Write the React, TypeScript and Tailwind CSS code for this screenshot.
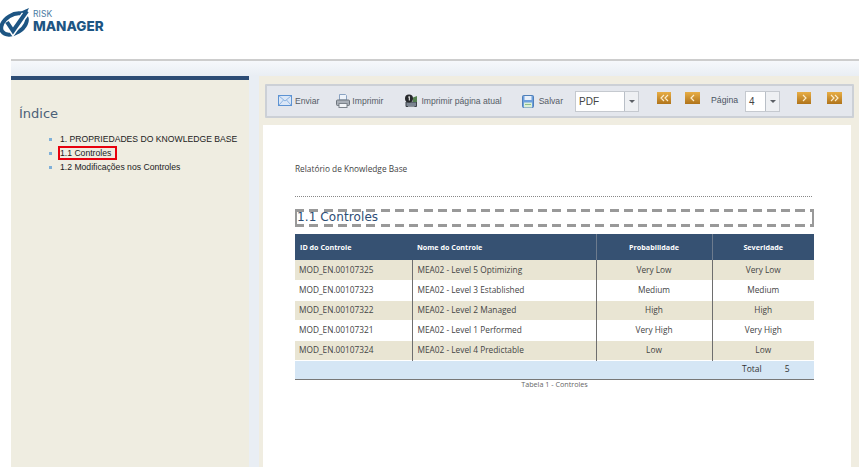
import React from "react";

const rows = [
  ["MOD_EN.00107325", "MEA02 - Level 5 Optimizing", "Very Low", "Very Low"],
  ["MOD_EN.00107323", "MEA02 - Level 3 Established", "Medium", "Medium"],
  ["MOD_EN.00107322", "MEA02 - Level 2 Managed", "High", "High"],
  ["MOD_EN.00107321", "MEA02 - Level 1 Performed", "Very High", "Very High"],
  ["MOD_EN.00107324", "MEA02 - Level 4 Predictable", "Low", "Low"],
];

const Envelope = () => (
  <svg width="14" height="11" viewBox="0 0 14 11">
    <rect x="0.5" y="0.5" width="13" height="10" fill="#dbe7f7" stroke="#5d93d3" />
    <path d="M1 1l6 5 6-5M1 10l4.5-5M13 10L8.5 5" fill="none" stroke="#8db4e2" />
  </svg>
);
const Printer = () => (
  <svg width="14" height="14" viewBox="0 0 14 14">
    <path d="M3.5 6V.5h6l1 1V6z" fill="#eef3fa" stroke="#8aa3c2" />
    <rect x="0.5" y="6" width="13" height="5.5" rx="1" fill="#aab0b8" stroke="#6d747c" />
    <rect x="3" y="9.5" width="8" height="4" fill="#f3f5f8" stroke="#7d848c" />
  </svg>
);
const PrinterPage = () => (
  <svg width="14" height="14" viewBox="0 0 14 14">
    <path d="M2 8h10.5v4.5H2z" fill="#7b8490" stroke="#3d4248" />
    <path d="M9 3.5l4-1.5v6H9z" fill="#55804f" />
    <circle cx="5" cy="4.5" r="4" fill="#26282b" />
    <path d="M4.3 3.2l1-.7v4" fill="none" stroke="#fff" strokeWidth="1" />
    <path d="M4 12.5h6.5v1H4z" fill="#dfe3e8" />
  </svg>
);
const Floppy = () => (
  <svg width="12" height="13" viewBox="0 0 12 13">
    <rect x="0.5" y="0.5" width="11" height="12" rx="1" fill="#6c9fdc" stroke="#4f7fb8" />
    <rect x="2.5" y="1" width="7" height="4" fill="#e9f0f9" />
    <rect x="2" y="7.5" width="8" height="5" fill="#dcefd8" />
    <path d="M3 9.5h6" stroke="#8fbf88" />
  </svg>
);
const Arrow = ({ d, w }: { d: string; w: number }) => (
  <div
    className="mb-[7px] flex h-[12px] items-center justify-center bg-gradient-to-b from-[#e8ae45] to-[#b0741a]"
    style={{ width: w }}
  >
    <svg width="10" height="8" viewBox="0 0 10 8">
      <path d={d} fill="none" stroke="#fbeccb" strokeWidth="1.2" />
    </svg>
  </div>
);
const Caret = () => (
  <div className="flex h-full w-[14px] items-center justify-center border-l border-[#b9bfc7] bg-[#eef0f3]">
    <div className="h-0 w-0 border-x-[3px] border-t-[3px] border-x-transparent border-t-[#5c6066]" />
  </div>
);
const ToolBtn = ({ icon, label, gap, cls }: { icon: React.ReactNode; label: string; gap: string; cls: string }) => (
  <div className={`flex items-center ${gap} ${cls}`}>
    {icon}
    <span className="text-[8.6px] text-[#555c66]">{label}</span>
  </div>
);

export default function App() {
  return (
    <div className="h-[467px] w-[864px] overflow-hidden bg-white font-['Liberation_Sans',sans-serif]">
      <header className="h-[59px] pt-[8px]">
        <div className="flex items-start">
          <svg width="33" height="29" viewBox="0 0 33 29">
            <ellipse cx="14" cy="16" rx="14" ry="9" transform="rotate(-32 14 16)" fill="none" stroke="#1d5583" strokeWidth="4" />
            <path d="M7 14l6 9L28 2" fill="none" stroke="#fff" strokeWidth="7" />
            <path d="M7 14l6 9L27 3" fill="none" stroke="#1d5583" strokeWidth="4" />
            <path d="M20 4L29 0l-3 6z" fill="#1d5583" />
          </svg>
          <div className="mt-[2px] flex flex-col font-['Inter',sans-serif] text-[#1d5583]">
            <span className="text-[8.5px] leading-[9px] tracking-[0.1px] text-[#4a7ba3]">RISK</span>
            <span className="text-[13.5px] font-extrabold leading-[14px]">MANAGER</span>
          </div>
        </div>
      </header>

      <div className="ml-[11px] flex h-[408px] w-[848px] flex-col border-t-2 border-[#cdcdcd]">
        <div className="h-[15px] shrink-0 bg-gradient-to-b from-[#f6f8fb] to-[#e9eef4]" />
        <div className="flex min-h-0 flex-1 bg-[#e9eef4]">
          <aside className="w-[238px] shrink-0 border-t-4 border-[#2d4d75] bg-[#efede1]">
            <h2 className="mt-[24px] pl-[8px] font-['DejaVu_Sans',sans-serif] text-[13px] font-[400] leading-[20px] text-[#4a6078]">Índice</h2>
            <ul className="mt-[8px] pl-[38px] text-[8.65px] text-[#222]">
              <li className="flex h-[14px] items-center">
                <span className="mr-[8px] h-[3px] w-[3px] bg-[#7fb0d8]" />
                <span>1. PROPRIEDADES DO KNOWLEDGE BASE</span>
              </li>
              <li className="flex h-[14px] items-center">
                <span className="mr-[6px] h-[3px] w-[3px] bg-[#7fb0d8]" />
                <span className="flex h-[14px] w-[59px] items-center border-2 border-[#e8000d] bg-transparent">1.1 Controles</span>
              </li>
              <li className="flex h-[14px] items-center">
                <span className="mr-[8px] h-[3px] w-[3px] bg-[#7fb0d8]" />
                <span>1.2 Modificações nos Controles</span>
              </li>
            </ul>
          </aside>

          <main className="ml-[10px] flex w-[600px] shrink-0 flex-col bg-[#f0ede1] pt-[8px]">
            <div className="ml-[6px] flex h-[34px] w-[589px] shrink-0 items-center rounded-[1px] border-2 border-[#ccd0d6] bg-[#e4e7ed]">
              <ToolBtn icon={<Envelope />} label="Enviar" gap="gap-[3px]" cls="ml-[11px]" />
              <ToolBtn icon={<Printer />} label="Imprimir" gap="gap-[2px]" cls="ml-[17px]" />
              <ToolBtn icon={<PrinterPage />} label="Imprimir página atual" gap="gap-[3px]" cls="ml-[21px]" />
              <ToolBtn icon={<Floppy />} label="Salvar" gap="gap-[5px]" cls="ml-[20px]" />
              <div className="ml-[12px] flex h-[21px] w-[64px] items-center justify-between border border-[#c5c9cf] bg-white pl-[3px] text-[10px] text-[#444]">
                PDF
                <Caret />
              </div>
              <div className="ml-[18px]"><Arrow w={14} d="M5 1L2 4l3 3M9 1L6 4l3 3" /></div>
              <div className="ml-[14px]"><Arrow w={15} d="M6 1L3 4l3 3" /></div>
              <span className="ml-[11px] text-[8.7px] text-[#4b5563]">Página</span>
              <div className="ml-[7px] flex h-[21px] w-[35px] items-center justify-between border border-[#c5c9cf] bg-white pl-[3px] text-[10px] text-[#444]">
                4
                <Caret />
              </div>
              <div className="ml-[17px]"><Arrow w={14} d="M4 1l3 3-3 3" /></div>
              <div className="ml-[16px]"><Arrow w={15} d="M1 1l3 3-3 3M5 1l3 3-3 3" /></div>
            </div>

            <div className="ml-[4px] mt-[7px] min-h-0 w-[588px] flex-1 bg-white pl-[32px] pt-[38px] font-['Open_Sans',sans-serif]">
              <p className="text-[8.3px] leading-[12px] text-[#444]">Relatório de Knowledge Base</p>
              <div className="mt-[21px] h-0 w-[517px] border-t border-dotted border-[#888]" />
              <h3 className="mt-[12px] flex h-[18px] w-[519px] flex-col justify-between">
                <div className="h-[3px] bg-[repeating-linear-gradient(90deg,#999_0_9px,transparent_9px_14.3px)]" />
                <div className="h-[12px] border-x-2 border-dashed border-[#999] font-['DejaVu_Sans',sans-serif] text-[12px] font-[400] leading-[10px] tracking-[0.1px] text-[#2d4d75]">
                  1.1 Controles
                </div>
                <div className="h-[3px] bg-[repeating-linear-gradient(90deg,#999_0_9px,transparent_9px_14.3px)]" />
              </h3>
              <table className="mt-[7px] w-[519px] table-fixed border-collapse text-[8.3px] text-[#444]">
                <colgroup>
                  <col className="w-[117px]" />
                  <col className="w-[184px]" />
                  <col className="w-[116px]" />
                  <col className="w-[102px]" />
                </colgroup>
                <thead>
                  <tr className="h-[26px] bg-[#365172] text-[7.2px] font-bold text-white">
                    <th className="pl-[5px] text-left">ID do Controle</th>
                    <th className="pl-[5px] text-left">Nome do Controle</th>
                    <th className="border-l border-[#6d7b8e] text-center">Probabilidade</th>
                    <th className="border-l border-[#6d7b8e] text-center">Severidade</th>
                  </tr>
                </thead>
                <tbody>
                  {rows.map((r, i) => (
                    <tr key={r[0]} className={`h-[20px] border-b border-white ${i % 2 === 0 ? "bg-[#e9e5d3]" : "bg-white"}`}>
                      <td className="pl-[4px]">{r[0]}</td>
                      <td className="border-l border-[#6e6e6e] pl-[5px]">{r[1]}</td>
                      <td className="border-l border-[#6e6e6e] text-center">{r[2]}</td>
                      <td className="border-l border-[#6e6e6e] text-center">{r[3]}</td>
                    </tr>
                  ))}
                  <tr className="h-[19px] border-b-[1px] border-[#777] bg-[#d5e6f5]">
                    <td colSpan={3} />
                    <td className="text-[8.5px] text-[#333]">
                      <span className="ml-[30px]">Total</span>
                      <span className="ml-[23px]">5</span>
                    </td>
                  </tr>
                </tbody>
              </table>
              <p className="w-[519px] text-center text-[7.2px] leading-[8px] text-[#666]">Tabela 1 - Controles</p>
            </div>
          </main>
        </div>
      </div>
    </div>
  );
}
